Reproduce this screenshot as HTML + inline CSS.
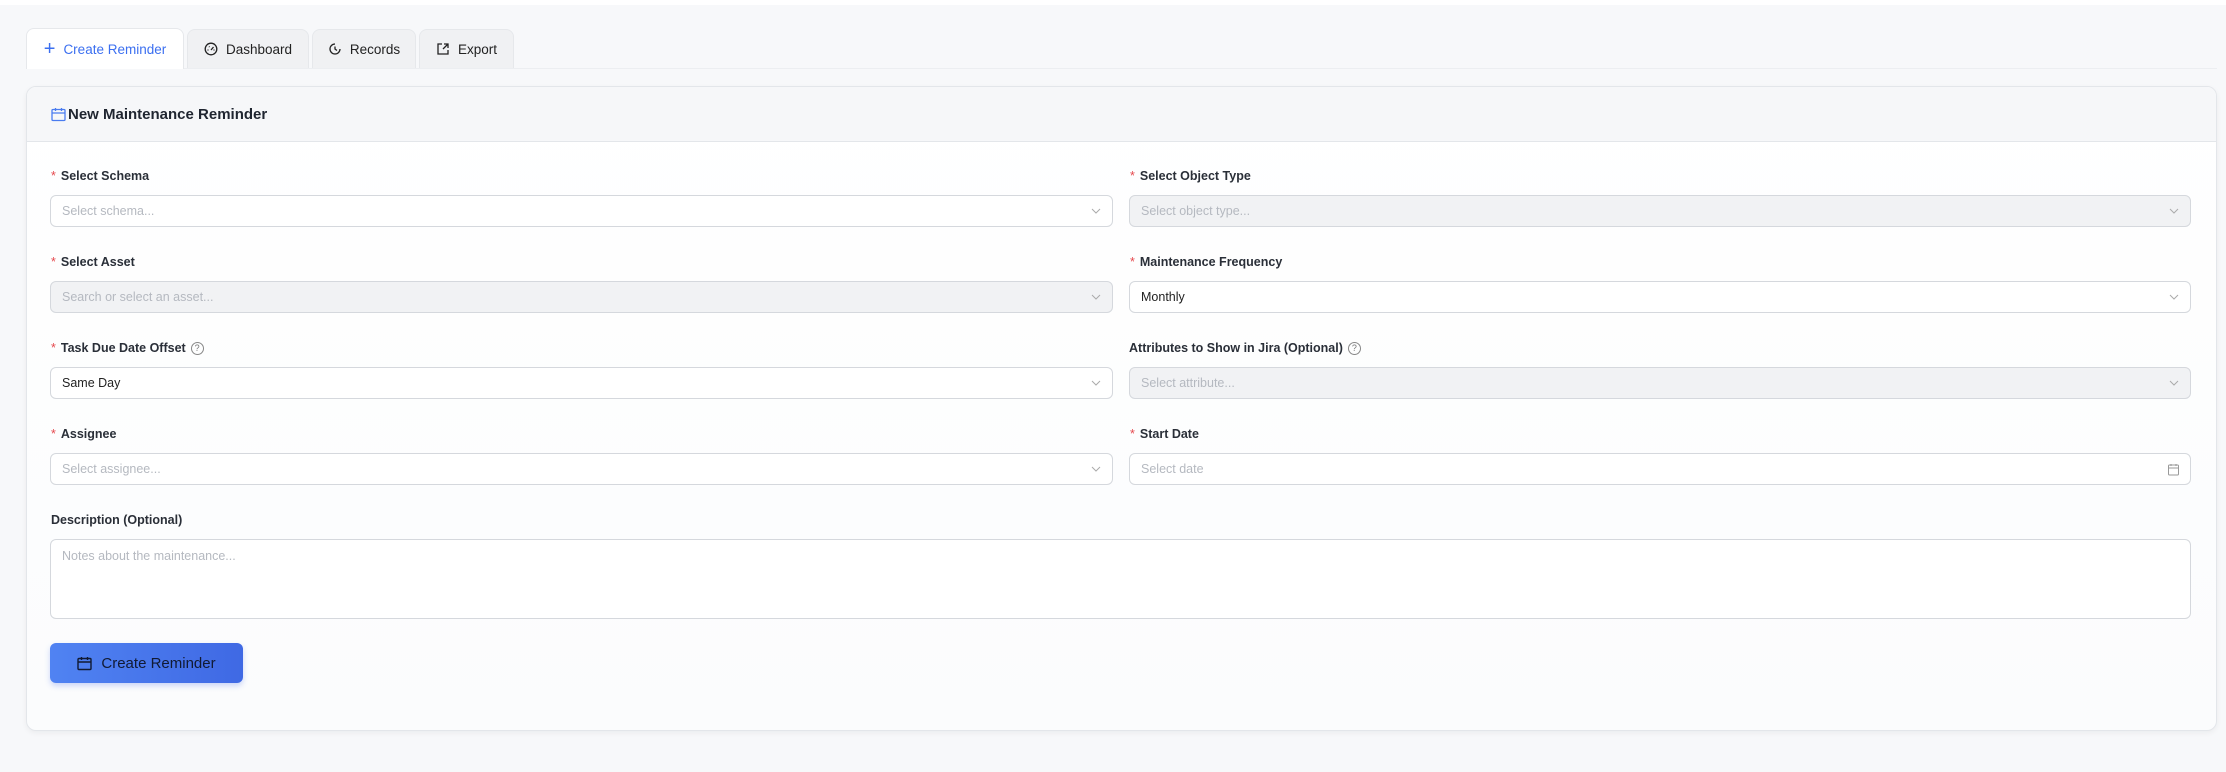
<!DOCTYPE html>
<html><head><meta charset="utf-8"><style>
*{box-sizing:border-box;margin:0;padding:0}
body{width:2226px;height:772px;background:#f7f8fa;font-family:"Liberation Sans",sans-serif;position:relative;overflow:hidden}
.top{position:absolute;left:0;top:0;width:2226px;height:5px;background:#fff}
.tab{position:absolute;top:29px;height:39px;border-radius:8px 8px 0 0;background:#f0f1f3;border:1px solid #e6e8eb;border-bottom:none;font-size:13.5px;color:#222;display:flex;align-items:center;justify-content:center;gap:8px}
.tab.act{background:#fff;color:#3b6ff0;top:28px;height:41px}
.tabline{position:absolute;left:26px;top:68px;width:2191px;height:1px;background:#eceef1}
.card{position:absolute;left:26px;top:86px;width:2191px;height:645px;border:1px solid #e3e6ea;border-radius:10px;background:linear-gradient(180deg,#fff,#fbfcfd);box-shadow:0 2px 6px rgba(0,0,0,.05);overflow:hidden}
.hdr{position:absolute;left:0;top:0;width:100%;height:55px;background:#f6f7f9;border-bottom:1px solid #e3e6ea}
.title{position:absolute;left:24px;top:19px;font-size:15px;font-weight:bold;color:#1f2530;display:flex;align-items:center;gap:2px}
.lbl{position:absolute;font-size:12.5px;font-weight:bold;color:#2a2f38;display:flex;align-items:center}
.lbl .s{color:#e5484d;margin-right:5px;font-weight:normal}
.inp{position:absolute;height:32px;border:1px solid #d5d8dd;border-radius:6px;background:#fff;font-size:12.5px;color:#b5b9c0;padding-left:11px;display:flex;align-items:center}
.inp.dis{background:#f1f2f4}
.inp.val{color:#222}
.chev{position:absolute;right:10px;top:9px}
.q{display:inline-block;width:13px;height:13px;border:1px solid #888;border-radius:50%;font-size:9px;color:#777;text-align:center;line-height:11px;margin-left:5px;font-weight:normal}
.btn{position:absolute;left:50px;top:643px;width:193px;height:40px;border-radius:6px;background:linear-gradient(90deg,#5083f2,#3f69e4);box-shadow:0 3px 6px rgba(60,100,230,.25);color:#111a33;font-size:15px;display:flex;align-items:center;justify-content:center;gap:9px}
</style></head><body>
<div class="top"></div>
<div class="tabline"></div>
<div class="tab act" style="left:26px;width:158px"><span style="font-size:20px;font-weight:300;line-height:1">+</span>Create Reminder</div>
<div class="tab" style="left:187px;width:122px"><svg width="14" height="14" viewBox="0 0 14 14" fill="none" stroke="#222" stroke-width="1.3"><circle cx="7" cy="7" r="5.8"/><path d="M7 8l2.5-3M3.5 8h1M9.5 8h1M5 4.5l.5.5"/></svg>Dashboard</div>
<div class="tab" style="left:312px;width:104px"><svg width="14" height="14" viewBox="0 0 14 14" fill="none" stroke="#222" stroke-width="1.3"><path d="M12 7A5 5 0 1 1 7 2M7 4.5V7l2 1.5"/></svg>Records</div>
<div class="tab" style="left:419px;width:95px"><svg width="14" height="14" viewBox="0 0 14 14" fill="none" stroke="#222" stroke-width="1.3"><path d="M6 2H2v10h10V8M8 2h4v4M12 2L7 7"/></svg>Export</div>
<div class="card">
<div class="hdr"></div>
<div class="title"><svg width="15" height="15" viewBox="0 0 15 15" fill="none" stroke="#4a7cf0" stroke-width="1.3"><rect x="1" y="2.5" width="13" height="11" rx="1"/><path d="M1 6h13M4.5 1v3M10.5 1v3"/></svg>New Maintenance Reminder</div>
</div>
<div class="lbl" style="left:51px;top:169px"><span class="s">*</span>Select Schema</div>
<div class="inp" style="left:50px;top:195px;width:1063px">Select schema...<svg class="chev" width="12" height="12" viewBox="0 0 12 12" fill="none" stroke="#aaa"><path d="M2 4l4 4 4-4"/></svg></div>
<div class="lbl" style="left:51px;top:255px"><span class="s">*</span>Select Asset</div>
<div class="inp dis" style="left:50px;top:281px;width:1063px">Search or select an asset...<svg class="chev" width="12" height="12" viewBox="0 0 12 12" fill="none" stroke="#aaa"><path d="M2 4l4 4 4-4"/></svg></div>
<div class="lbl" style="left:51px;top:341px"><span class="s">*</span>Task Due Date Offset<span class="q">?</span></div>
<div class="inp val" style="left:50px;top:367px;width:1063px">Same Day<svg class="chev" width="12" height="12" viewBox="0 0 12 12" fill="none" stroke="#aaa"><path d="M2 4l4 4 4-4"/></svg></div>
<div class="lbl" style="left:51px;top:427px"><span class="s">*</span>Assignee</div>
<div class="inp" style="left:50px;top:453px;width:1063px">Select assignee...<svg class="chev" width="12" height="12" viewBox="0 0 12 12" fill="none" stroke="#aaa"><path d="M2 4l4 4 4-4"/></svg></div>
<div class="lbl" style="left:1130px;top:169px"><span class="s">*</span>Select Object Type</div>
<div class="inp dis" style="left:1129px;top:195px;width:1062px">Select object type...<svg class="chev" width="12" height="12" viewBox="0 0 12 12" fill="none" stroke="#aaa"><path d="M2 4l4 4 4-4"/></svg></div>
<div class="lbl" style="left:1130px;top:255px"><span class="s">*</span>Maintenance Frequency</div>
<div class="inp val" style="left:1129px;top:281px;width:1062px">Monthly<svg class="chev" width="12" height="12" viewBox="0 0 12 12" fill="none" stroke="#aaa"><path d="M2 4l4 4 4-4"/></svg></div>
<div class="lbl" style="left:1129px;top:341px">Attributes to Show in Jira (Optional)<span class="q">?</span></div>
<div class="inp dis" style="left:1129px;top:367px;width:1062px">Select attribute...<svg class="chev" width="12" height="12" viewBox="0 0 12 12" fill="none" stroke="#aaa"><path d="M2 4l4 4 4-4"/></svg></div>
<div class="lbl" style="left:1130px;top:427px"><span class="s">*</span>Start Date</div>
<div class="inp" style="left:1129px;top:453px;width:1062px">Select date<svg class="chev" width="13" height="13" viewBox="0 0 13 13" fill="none" stroke="#999"><rect x="1.5" y="2" width="10" height="10" rx="1"/><path d="M1.5 5h10M4 1v2M9 1v2"/></svg></div>
<div class="lbl" style="left:51px;top:513px">Description (Optional)</div>
<div class="inp" style="left:50px;top:539px;width:2141px;height:80px;align-items:flex-start;padding-top:9px">Notes about the maintenance...</div>
<div class="btn"><svg width="15" height="15" viewBox="0 0 15 15" fill="none" stroke="#111a33" stroke-width="1.4"><rect x="1" y="2.5" width="13" height="11" rx="1"/><path d="M1 6h13M4.5 1v3M10.5 1v3"/></svg>Create Reminder</div>
</body></html>
